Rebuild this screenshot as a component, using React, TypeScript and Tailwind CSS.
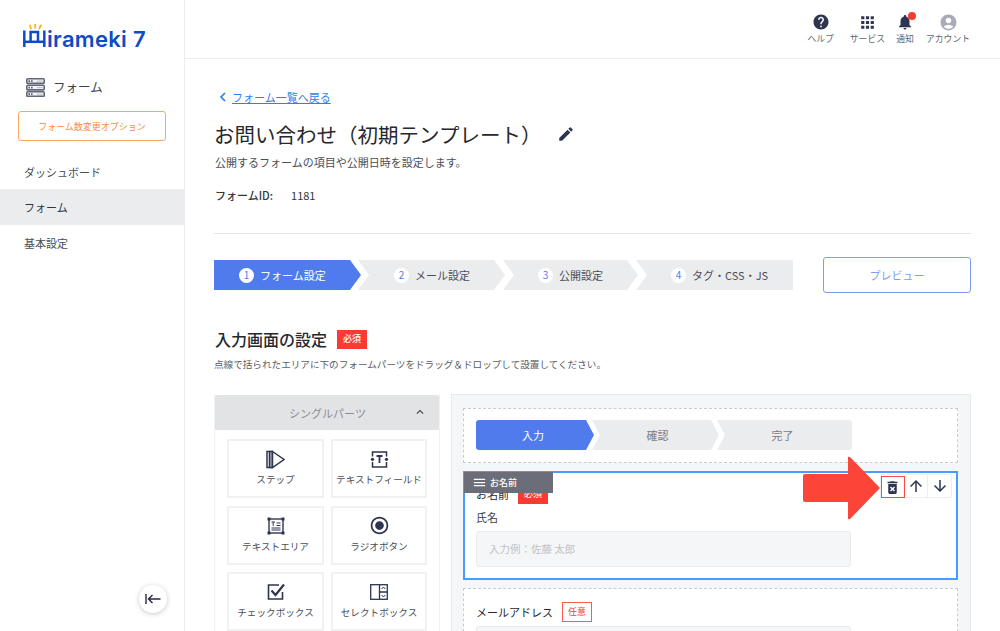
import React from "react";
import { MdHelp, MdApps, MdNotifications, MdAccountCircle, MdEdit, MdDeleteForever, MdArrowUpward, MdArrowDownward, MdMenu, MdExpandLess, MdRadioButtonChecked } from "react-icons/md";

const navy = "#2f3550";

function ServerIcon() {
  return (
    <svg width="19" height="19" viewBox="0 0 19 19">
      {[0, 6.5, 13].map((y) => (
        <g key={y}>
          <rect x="0.8" y={y + 0.8} width="17.4" height="4.6" rx="1" fill="#f3f4f6" stroke="#62677b" strokeWidth="1.6" />
          <rect x="2.4" y={y + 2.2} width="1.6" height="1.8" fill="#62677b" />
          <rect x="5" y={y + 2.2} width="1.6" height="1.8" fill="#62677b" />
          <rect x="11" y={y + 2.6} width="5.5" height="1" fill="#b9bcc8" />
        </g>
      ))}
    </svg>
  );
}

function LogoMark() {
  return (
    <svg width="23" height="24" viewBox="0 0 23 24" className="shrink-0">
      <g fill="#f4b81c">
        <path d="M5.8 1 L7.6 0.6 L9 5 L7.4 5.4 Z" />
        <path d="M11.2 0 L13.2 0 L12.8 4.8 L11.4 4.8 Z" />
        <path d="M17.2 0.6 L19.2 1.2 L16.6 5.4 L15.2 4.8 Z" />
      </g>
      <g fill="none" stroke="#0f4cc4" strokeWidth="2.5">
        <path d="M1.3 6.5 V23" />
        <path d="M21.3 6.5 V23" />
        <path d="M1.3 17.8 H21.3" />
        <path d="M7.6 17.8 V8 H15 V17.8" />
      </g>
    </svg>
  );
}

function StepIcon() {
  return (
    <svg width="19" height="19" viewBox="0 0 19 19" fill="none" stroke={navy} strokeWidth="1.5">
      <rect x="1" y="1.5" width="2.6" height="16" />
      <rect x="3.6" y="1.5" width="2.6" height="16" />
      <path d="M6.5 1.5 L18 9.5 L6.5 17.5 Z" />
    </svg>
  );
}

function TextFieldIcon() {
  return (
    <svg width="19" height="17" viewBox="0 0 19 17" fill="none" stroke={navy} strokeWidth="1.5">
      <path d="M2.5 5.5 V1 H16.5 V5.5 M2.5 11 V16 H16.5 V11" />
      <circle cx="2.5" cy="8.3" r="1.6" fill={navy} stroke="none" />
      <circle cx="16.5" cy="8.3" r="1.6" fill={navy} stroke="none" />
      <path d="M6.5 5 H12.5 M9.5 5 V12" strokeWidth="1.8" />
    </svg>
  );
}

function TextAreaIcon() {
  return (
    <svg width="18" height="18" viewBox="0 0 18 18" fill="none" stroke={navy} strokeWidth="1.4">
      <rect x="2" y="2" width="14" height="14" />
      <rect x="0.5" y="0.5" width="3" height="3" fill={navy} stroke="none" />
      <rect x="14.5" y="0.5" width="3" height="3" fill={navy} stroke="none" />
      <rect x="0.5" y="14.5" width="3" height="3" fill={navy} stroke="none" />
      <rect x="14.5" y="14.5" width="3" height="3" fill={navy} stroke="none" />
      <path d="M4.5 5 H8 M6.2 5 V9 M9.5 6 H13.5 M9.5 8.5 H13.5 M4.5 11 H13.5 M4.5 13 H13.5" strokeWidth="1" />
    </svg>
  );
}

function CheckIcon() {
  return (
    <svg width="18" height="18" viewBox="0 0 18 18" fill="none" stroke={navy}>
      <path d="M15.5 9 V16 H1.5 V2 H12" strokeWidth="1.6" />
      <path d="M4.5 7.5 L8.5 12 L17 1.5" strokeWidth="2.2" />
    </svg>
  );
}

function SelectIcon() {
  return (
    <svg width="18" height="16" viewBox="0 0 18 16" fill="none" stroke={navy} strokeWidth="1.3">
      <rect x="0.7" y="0.7" width="16.6" height="14.6" />
      <path d="M9.5 0.7 V15.3 M9.5 8 H17.3" />
      <path d="M11.5 5 L13.4 3 L15.3 5 M11.5 11 L13.4 13 L15.3 11" strokeWidth="1" />
    </svg>
  );
}

function PartCard({ icon, label }: { icon: React.ReactNode; label: string }) {
  return (
    <div className="h-[59px] border-2 border-[#f0f1f3] flex flex-col items-center pt-[8px]">
      <div className="h-[20px] flex items-center justify-center">{icon}</div>
      <div className="mt-[3px] text-[9.6px] leading-[14px] text-[#4a4d58] whitespace-nowrap">{label}</div>
    </div>
  );
}

function HeaderItem({ icon, label }: { icon: React.ReactNode; label: string }) {
  return (
    <div className="flex flex-col items-center">
      <div className="h-[20px] flex items-center justify-center">{icon}</div>
      <div className="text-[8.8px] leading-[12px] text-[#63666f] mt-[1px] whitespace-nowrap">{label}</div>
    </div>
  );
}

function Step({ n, label, className, first, pad }: { n: number; label: string; className: string; first?: boolean; pad: string }) {
  return (
    <div className={`h-[30px] flex items-center ${pad} ${className}`}>
      <span className="w-[15px] h-[15px] rounded-full bg-white flex items-center justify-center text-[10px] leading-none text-[#4f7bed]">{n}</span>
      <span className={`ml-[6px] text-[11px] leading-none whitespace-nowrap ${first ? "text-white" : "text-[#4a4d58]"}`}>{label}</span>
    </div>
  );
}

export default function App() {
  return (
    <div className="w-[1000px] h-[631px] overflow-hidden flex bg-white font-['Noto_Sans_CJK_JP','Noto_Sans',sans-serif]">
      <aside className="w-[185px] h-full shrink-0 border-r border-[#ececee] flex flex-col">
        <div className="pl-[23px] pt-[24px] h-[74px] flex items-start">
          <LogoMark />
          <span className="ml-[1px] mt-[2px] text-[22px] leading-[26px] font-semibold tracking-[0.3px] text-[#0f4cc4] font-['Inter',sans-serif] whitespace-nowrap">irameki 7</span>
        </div>
        <div className="flex items-center pl-[26px] h-[26px]">
          <ServerIcon />
          <span className="ml-[8px] text-[12.5px] text-[#3f424c]">フォーム</span>
        </div>
        <div className="mx-[18px] mt-[11px] h-[30px] pt-[1px] border border-[#fba65f] rounded-[3px] flex items-center justify-center text-[9px] text-[#fb8a45]">フォーム数変更オプション</div>
        <nav className="mt-[13px] text-[11px] text-[#4a4d58]">
          <div className="h-[35px] pl-[24px] pt-[1px] flex items-center">ダッシュボード</div>
          <div className="h-[36px] pl-[24px] pt-[1px] flex items-center bg-[#ebecee] text-[#33353d]">フォーム</div>
          <div className="h-[35px] pl-[24px] pt-[1px] flex items-center">基本設定</div>
        </nav>
        <div className="mt-auto mb-[18px] ml-[139px] w-[28px] h-[28px] rounded-full bg-white shadow-[0_1px_5px_rgba(0,0,0,0.22)] flex items-center justify-center">
          <svg width="16" height="12" viewBox="0 0 16 12" fill="none" stroke="#232a45" strokeWidth="1.4">
            <path d="M1 1 V11 M15.5 6 H3.5 M7.5 2 L3.5 6 L7.5 10" />
          </svg>
        </div>
      </aside>

      <div className="flex-1 min-w-0 flex flex-col">
        <header className="h-[59px] shrink-0 border-b border-[#ececee] flex items-start justify-end pt-[12px] pr-[30px]">
          <div className="flex items-start">
            <HeaderItem icon={<MdHelp size={18} color={navy} />} label="ヘルプ" />
            <div className="ml-[16px]"><HeaderItem icon={<MdApps size={19} color={navy} />} label="サービス" /></div>
            <div className="ml-[11px]">
              <HeaderItem
                icon={
                  <span className="relative block w-[18px] h-[18px]">
                    <MdNotifications size={18} color={navy} />
                    <span className="absolute right-[-2px] top-[-1px] w-[8px] h-[8px] rounded-full bg-[#fb3b32]" />
                  </span>
                }
                label="通知"
              />
            </div>
            <div className="ml-[12px]"><HeaderItem icon={<MdAccountCircle size={19} color="#a9acb8" />} label="アカウント" /></div>
          </div>
        </header>

        <main className="pl-[29px] pr-[29px] flex-1 min-h-0">
          <a className="mt-[29px] flex items-center h-[18px] text-[11px] text-[#2f80ed]">
            <svg width="8" height="10" viewBox="0 0 8 10" fill="none" stroke="#2f80ed" strokeWidth="1.7" className="ml-[5px]">
              <path d="M6 1 L2 5 L6 9" />
            </svg>
            <span className="ml-[5px] underline">フォーム一覧へ戻る</span>
          </a>
          <div className="mt-[13px] flex items-center h-[30px]">
            <h1 className="text-[20.5px] leading-[30px] text-[#26282e] whitespace-nowrap">お問い合わせ（初期テンプレート）</h1>
            <MdEdit size={18} color={navy} className="ml-[16px]" />
          </div>
          <p className="mt-[5px] pl-[1px] text-[11px] leading-[16px] text-[#4a4d58]">公開するフォームの項目や公開日時を設定します。</p>
          <div className="mt-[17px] pl-[1px] h-[16px] flex items-center text-[11px] text-[#33353d]">
            <span className="font-medium">フォームID:</span>
            <span className="ml-[18px]">1181</span>
          </div>
          <div className="mt-[30px] h-px bg-[#e4e5e8]" />

          <div className="mt-[23px] flex items-center justify-between h-[36px]">
            <div className="flex">
              <Step n={1} label="フォーム設定" first pad="pl-[25px]" className="w-[147px] bg-[#4f7bed] [clip-path:polygon(0_0,136px_0,147px_50%,136px_100%,0_100%)]" />
              <Step n={2} label="メール設定" pad="pl-[36px]" className="ml-[-3px] w-[147px] bg-[#ebecee] [clip-path:polygon(0_0,136px_0,147px_50%,136px_100%,0_100%,11px_50%)]" />
              <Step n={3} label="公開設定" pad="pl-[35px]" className="ml-[-2px] w-[135px] bg-[#ebecee] [clip-path:polygon(0_0,124px_0,135px_50%,124px_100%,0_100%,11px_50%)]" />
              <Step n={4} label="タグ・CSS・JS" pad="pl-[35px]" className="ml-[-2px] w-[157px] bg-[#ebecee] [clip-path:polygon(0_0,100%_0,100%_100%,0_100%,11px_50%)]" />
            </div>
            <div className="w-[148px] h-[36px] border border-[#7d9df0] rounded-[3px] flex items-center justify-center text-[11px] text-[#7d9df0]">プレビュー</div>
          </div>

          <div className="mt-[36px] flex items-center h-[22px] relative top-[-1px]">
            <h2 className="text-[16px] leading-[22px] font-medium text-[#26282e] whitespace-nowrap ml-[1px]">入力画面の設定</h2>
            <span className="ml-[10px] w-[30px] h-[19px] bg-[#fb3b32] text-white text-[9px] font-medium flex items-center justify-center">必須</span>
          </div>
          <p className="mt-[6px] text-[9.6px] leading-[14px] text-[#5a5d66] whitespace-nowrap">点線で括られたエリアに下のフォームパーツをドラッグ＆ドロップして設置してください。</p>

          <div className="mt-[23px] flex gap-[11px]">
            <div className="w-[226px] shrink-0 border-x border-[#f0f1f3] pt-[1px]">
              <div className="relative h-[35px] bg-[#e2e3e5] rounded-t-[2px] flex items-center justify-center text-[11px] text-[#8a8d95] pt-[1px] pl-[1px]">
                シングルパーツ
                <MdExpandLess size={14} color="#3a3d48" className="absolute right-[12px] top-[10px]" />
              </div>
              <div className="px-[12px] pt-[9px] grid grid-cols-[97px_96px] gap-x-[7px] gap-y-[7.5px]">
                <PartCard icon={<StepIcon />} label="ステップ" />
                <PartCard icon={<TextFieldIcon />} label="テキストフィールド" />
                <PartCard icon={<TextAreaIcon />} label="テキストエリア" />
                <PartCard icon={<MdRadioButtonChecked size={21} color={navy} />} label="ラジオボタン" />
                <PartCard icon={<CheckIcon />} label="チェックボックス" />
                <PartCard icon={<SelectIcon />} label="セレクトボックス" />
              </div>
            </div>

            <div className="w-[520px] shrink-0 bg-[#f5f6f8] border border-[#e9eaed] pl-[11px] pr-[12px] pt-[13px] pb-[20px]">
              <div className="h-[55px] bg-white border border-dashed border-[#c9cbd0] pl-[12px] pt-[11px] flex">
                <div className="w-[118px] h-[30px] rounded-l-[3px] bg-[#4f7bed] text-white text-[11px] flex items-center justify-center pr-[4px] [clip-path:polygon(0_0,110px_0,118px_50%,110px_100%,0_100%)]">入力</div>
                <div className="ml-[-2px] w-[127px] h-[30px] bg-[#ebecee] text-[#7a7d86] text-[11px] flex items-center justify-center pl-[4px] [clip-path:polygon(0_0,119px_0,127px_50%,119px_100%,0_100%,8px_50%)]">確認</div>
                <div className="ml-[-2px] w-[135px] h-[30px] rounded-r-[3px] bg-[#ebecee] text-[#7a7d86] text-[11px] flex items-center justify-center pr-[4px] [clip-path:polygon(0_0,100%_0,100%_100%,0_100%,8px_50%)]">完了</div>
              </div>

              <div className="relative mt-[8px] h-[109px] bg-white border-2 border-[#4a9bff] px-[11px]">
                <div className="flex items-center gap-[9px] h-[20px] mt-[11px]">
                  <span className="text-[11px] text-[#26282e]">お名前</span>
                  <span className="w-[30px] h-[19px] bg-[#fb3b32] text-white text-[9px] flex items-center justify-center">必須</span>
                </div>
                <div className="mt-[3px] text-[11px] leading-[20px] text-[#3a3d48]">氏名</div>
                <div className="mt-[4px] w-[375px] h-[36px] bg-[#f5f6f8] border border-[#e9eaed] rounded-[3px] flex items-center pl-[12px] text-[10.5px] text-[#c0c2c7]">入力例：佐藤 太郎</div>

                <div className="absolute left-[-1px] top-[-1px] w-[89px] h-[21px] bg-[#6b6d78] flex items-center pl-[8px] text-white text-[9px] font-medium">
                  <MdMenu size={15} color="#fff" />
                  <span className="ml-[3px]">お名前</span>
                </div>
                <div className="absolute left-[415px] top-[1px] w-[72px] h-[24px] bg-white border border-[#eceef1] rounded-[2px] flex">
                  <div className="w-[24px] h-[22px] mt-[1px] border border-[#fb4a42] flex items-center justify-center"><MdDeleteForever size={17} color={navy} /></div>
                  <div className="w-[24px] flex items-center justify-center border-r border-[#eceef1]"><MdArrowUpward size={18} color={navy} /></div>
                  <div className="w-[23px] flex items-center justify-center"><MdArrowDownward size={18} color={navy} /></div>
                </div>
                <svg className="absolute left-[338px] top-[-17px]" width="78" height="64" viewBox="0 0 78 64">
                  <path d="M2 18 H45 V2 Q45 0 47 1 L77 32 L47 63 Q45 64 45 62 V46 H2 Q0 46 0 44 V20 Q0 18 2 18 Z" fill="#fd4438" />
                </svg>
              </div>

              <div className="mt-[8px] h-[120px] bg-white border border-dashed border-[#c9cbd0] px-[12px] pt-[13px]">
                <div className="flex items-center gap-[9px] h-[20px]">
                  <span className="text-[11px] text-[#26282e]">メールアドレス</span>
                  <span className="w-[30px] h-[20px] bg-white border border-[#fb5a52] text-[#fb3b32] text-[9px] flex items-center justify-center">任意</span>
                </div>
                <div className="mt-[4px] w-[375px] h-[36px] bg-[#f5f6f8] border border-[#e9eaed] rounded-[3px]" />
              </div>
            </div>
          </div>
        </main>
      </div>
    </div>
  );
}
